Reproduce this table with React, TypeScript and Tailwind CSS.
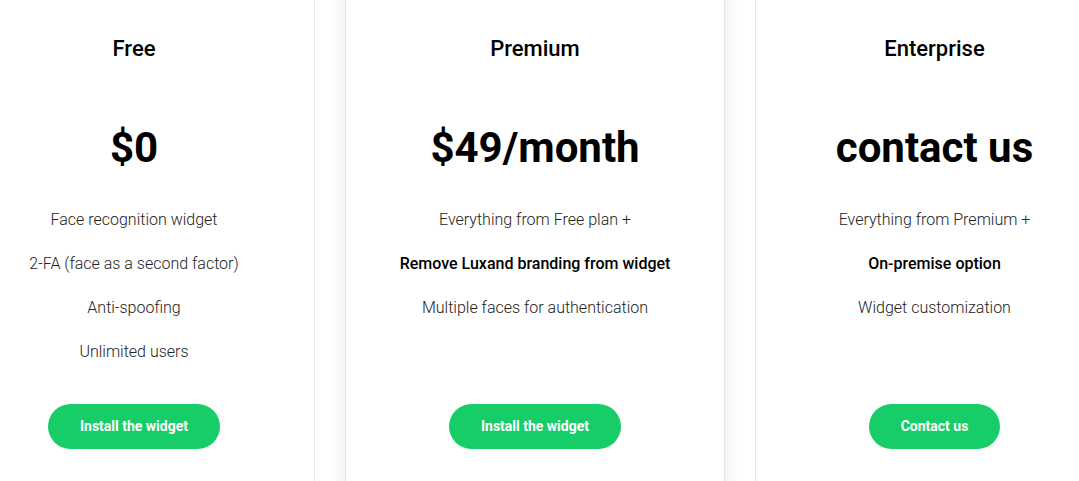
import React from "react";

type Plan = {
  title: string;
  price: string;
  features: { text: string; bold?: boolean }[];
  cta: string;
};

const plans: Plan[] = [
  {
    title: "Free",
    price: "$0",
    features: [
      { text: "Face recognition widget" },
      { text: "2-FA (face as a second factor)" },
      { text: "Anti-spoofing" },
      { text: "Unlimited users" },
    ],
    cta: "Install the widget",
  },
  {
    title: "Premium",
    price: "$49/month",
    features: [
      { text: "Everything from Free plan +" },
      { text: "Remove Luxand branding from widget", bold: true },
      { text: "Multiple faces for authentication" },
    ],
    cta: "Install the widget",
  },
  {
    title: "Enterprise",
    price: "contact us",
    features: [
      { text: "Everything from Premium +" },
      { text: "On-premise option", bold: true },
      { text: "Widget customization" },
    ],
    cta: "Contact us",
  },
];

function PlanBody({ plan }: { plan: Plan }) {
  return (
    <div className="flex flex-col items-center pt-[55px]">
      <h3 className="h-7 text-[22px] leading-7 font-medium text-black">{plan.title}</h3>
      <div className="mt-[60px] h-[50px] text-[42px] leading-[50px] font-bold text-black whitespace-nowrap">
        {plan.price}
      </div>
      <ul className="mt-[35px] flex h-[176px] flex-col items-center gap-5">
        {plan.features.map((f) => (
          <li
            key={f.text}
            className={
              f.bold
                ? "text-base leading-6 font-medium text-black whitespace-nowrap"
                : "text-base leading-6 font-light text-[#222] whitespace-nowrap"
            }
          >
            {f.text}
          </li>
        ))}
      </ul>
      <button className="mt-5 h-[45px] rounded-full bg-[#16cd68] px-8 text-sm leading-[45px] font-bold text-white">
        {plan.cta}
      </button>
    </div>
  );
}

export default function App() {
  return (
    <div
      className="h-[481px] w-[1079px] overflow-hidden bg-white"
      style={{ fontFamily: "Roboto, 'Noto Sans', Arial, sans-serif" }}
    >
      <div className="-mt-5 -ml-[46px] flex h-[521px] items-stretch">
        <div className="w-[361px] shrink-0 border-r border-[#e2e6ee]">
          <PlanBody plan={plans[0]} />
        </div>
        <div className="ml-[30px] w-[380px] shrink-0 border-x border-[#e4e6ee] bg-white shadow-[0_0_16px_rgba(30,40,80,0.10)]">
          <PlanBody plan={plans[1]} />
        </div>
        <div className="ml-[30px] w-[358px] shrink-0 border-l border-[#e2e6ee]">
          <PlanBody plan={plans[2]} />
        </div>
      </div>
    </div>
  );
}
